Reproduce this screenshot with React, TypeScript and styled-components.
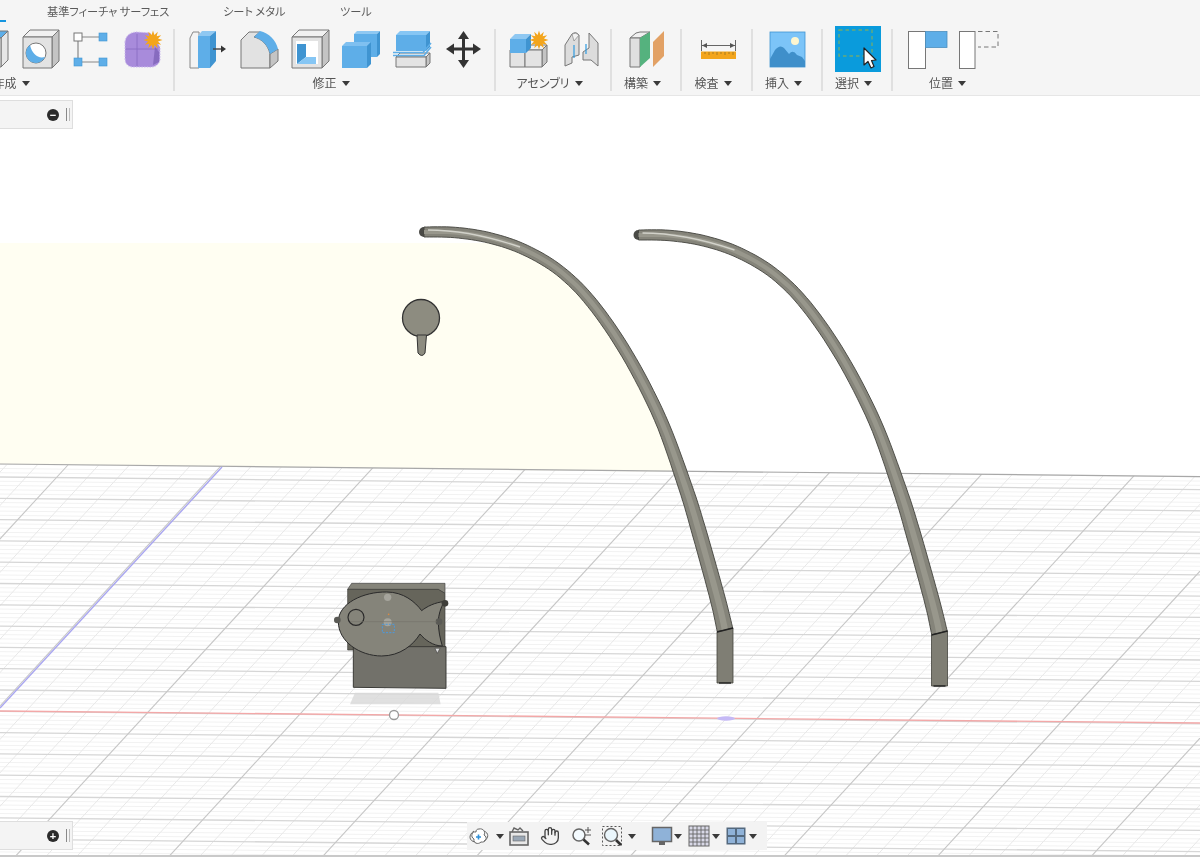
import React from "react";
import styled, { createGlobalStyle } from "styled-components";
import { Hand } from "lucide-react";

const Global = createGlobalStyle`
  html, body { margin: 0; padding: 0; background: #fff; overflow: hidden; }
  #root { width: 1200px; height: 857px; }
`;

const Page = styled.div`
  width: 1200px;
  height: 857px;
  display: flex;
  flex-direction: column;
  overflow: hidden;
  filter: blur(0.5px);
  font-family: "Noto Sans CJK JP", "Noto Sans", sans-serif;
  font-feature-settings: "palt";
  color: #555;
`;

const Toolbar = styled.header`
  flex: none;
  height: 96px;
  box-sizing: border-box;
  background: #f5f5f5;
  border-bottom: 1px solid #e6e6e6;
  display: flex;
  flex-direction: column;
  overflow: hidden;
`;

const Tabs = styled.nav`
  height: 22px;
  flex: none;
  display: flex;
  align-items: center;
  font-size: 11.2px;
  color: #5a5a5a;
`;

const ActiveTabMark = styled.span`
  width: 6px;
  height: 2px;
  align-self: flex-end;
  background: #1696e0;
  margin-right: 41px;
`;

const Tab = styled.span<{ $w: number }>`
  width: ${(p) => p.$w}px;
  white-space: nowrap;
  line-height: 22px;
`;

const Ribbon = styled.div`
  display: flex;
  margin-left: -144px;
  padding-top: 7px;
`;

const Group = styled.section<{ $w: number; $end?: boolean }>`
  flex: none;
  width: ${(p) => p.$w}px;
  height: 62px;
  box-sizing: border-box;
  padding: 1px 0 0 2px;
  border-right: ${(p) => (p.$end ? "none" : "2px solid #e0e0e0")};
  display: flex;
  flex-direction: column;
  align-items: center;
`;

const GroupIcons = styled.div`
  height: 38px;
  display: flex;
  align-items: center;
  gap: 13px;
`;

const GroupLabel = styled.div`
  margin-top: 8px;
  height: 14px;
  padding-right: 9px;
  display: flex;
  align-items: center;
  gap: 5px;
  font-size: 12px;
  line-height: 14px;
  color: #555;
  white-space: nowrap;
`;

const Caret = styled.i<{ $ml?: number }>`
  flex: none;
  display: block;
  width: 0;
  height: 0;
  margin-left: ${(p) => p.$ml ?? 0}px;
  border-left: 4px solid transparent;
  border-right: 4px solid transparent;
  border-top: 5px solid #3a3a3a;
`;

const Ico = styled.svg.attrs({ viewBox: "0 0 38 38" })`
  flex: none;
  width: 38px;
  height: 38px;
  overflow: visible;
`;

const SelectIco = styled.svg.attrs({ viewBox: "0 0 46 46" })`
  flex: none;
  width: 46px;
  height: 46px;
  margin: -4px 0;
  overflow: visible;
`;

const Viewport = styled.main`
  position: relative;
  flex: 1;
  min-height: 0;
  background: #fff;
`;

const Scene = styled.svg`
  position: absolute;
  inset: 0;
  width: 100%;
  height: 100%;
  display: block;
`;

const StatusEdge = styled.div`
  flex: none;
  height: 2px;
  background: #c9c9c9;
`;

const SidePanel = styled.aside<{ $top: number }>`
  position: absolute;
  left: 0;
  top: ${(p) => p.$top}px;
  width: 73px;
  height: 29px;
  box-sizing: border-box;
  background: #f4f4f4;
  border: 1px solid #dedede;
  border-left: none;
  display: flex;
  align-items: center;
  justify-content: flex-end;
  padding-right: 0;
  gap: 7px;
`;

const RoundButton = styled.span`
  width: 12px;
  height: 12px;
  border-radius: 50%;
  background: #2b2b2b;
  display: flex;
  align-items: center;
  justify-content: center;
  color: #fff;
  font: 700 11px/12px "Liberation Sans", sans-serif;
`;

const Grip = styled.span`
  width: 2px;
  height: 13px;
  margin-right: 2px;
  border-left: 1px solid #888;
  border-right: 1px solid #bbb;
`;

const NavBar = styled.div`
  position: absolute;
  left: 467px;
  top: 726px;
  width: 300px;
  height: 28px;
  box-sizing: border-box;
  padding-left: 2px;
  background: #f3f3f3;
  display: flex;
  align-items: center;
`;

const NavSlot = styled.span<{ $ml?: number }>`
  flex: none;
  display: flex;
  margin-left: ${(p) => p.$ml ?? 0}px;
  color: #444;
`;

const NavIco = styled.svg.attrs({ viewBox: "0 0 20 20" })`
  width: 20px;
  height: 20px;
  display: block;
  overflow: visible;
`;

const BLUE = "#5eaee8";
const DARK = "#3f94d1";
const EDGE = "#777";

type CubeProps = {
  x: number; y: number; w: number; h: number; d: number;
  front?: string; top?: string; side?: string; stroke?: string;
};

const Cube = ({ x, y, w, h, d, front = "#e3e3e3", top = "#f1f1f1", side = "#c4c4c4", stroke = EDGE }: CubeProps) => (
  <g stroke={stroke} strokeWidth={1} strokeLinejoin="round">
    <polygon points={`${x},${y} ${x + d},${y - d} ${x + w + d},${y - d} ${x + w},${y}`} fill={top} />
    <polygon points={`${x + w},${y} ${x + w + d},${y - d} ${x + w + d},${y + h - d} ${x + w},${y + h}`} fill={side} />
    <rect x={x} y={y} width={w} height={h} fill={front} />
  </g>
);

const Star = ({ cx, cy, r }: { cx: number; cy: number; r: number }) => {
  const pts: string[] = [];
  for (let i = 0; i < 24; i++) {
    const a = (i * Math.PI) / 12;
    const rr = i % 2 ? r * 0.55 : r;
    pts.push(`${(cx + rr * Math.cos(a)).toFixed(1)},${(cy + rr * Math.sin(a)).toFixed(1)}`);
  }
  return <polygon points={pts.join(" ")} fill="#f3a51c" />;
};

const BoxIcon = () => (
  <Ico><Cube x={1} y={8} w={29} h={29} d={7} front="#f2f2f2" top={BLUE} side="#e6e6e6" /></Ico>
);
const RevolveIcon = () => (
  <Ico>
    <Cube x={1} y={7} w={29} h={31} d={7} />
    <circle cx={14} cy={23} r={10} fill="#fff" stroke={EDGE} />
    <path d="M8 15 A10 10 0 0 0 11 32.5 A10 10 0 0 0 23 27 C16 29 10 24 8 15Z" fill={BLUE} />
  </Ico>
);
const SketchIcon = () => (
  <Ico>
    <path d="M9 7H26M5 11V28M9 32H26" stroke="#888" strokeWidth={1.2} fill="none" />
    <rect x={1} y={3} width={8} height={8} fill="#fff" stroke="#777" />
    <rect x={26} y={3} width={8} height={8} fill={BLUE} stroke={DARK} strokeWidth={0.6} />
    <rect x={1} y={28} width={8} height={8} fill={BLUE} stroke={DARK} strokeWidth={0.6} />
    <rect x={26} y={28} width={8} height={8} fill={BLUE} stroke={DARK} strokeWidth={0.6} />
  </Ico>
);
const FormIcon = () => (
  <Ico>
    <path d="M1 12 Q2 3 12 2 L26 3 L36 17 V30 Q34 38 24 37 H8 Q1 36 1 28Z" fill="#a88bdb" stroke="#c9b8ec" strokeDasharray="1.5 1.2" />
    <path d="M2 19 H34 M13 4 V36" stroke="#8a6ec4" strokeWidth={0.9} fill="none" />
    <path d="M31 17 L35 22 V32 L29 35Z" fill="#7c60b6" opacity={0.75} />
    <Star cx={29} cy={10} r={9.5} />
  </Ico>
);
const PressPullIcon = () => (
  <Ico>
    <path d="M1 38 V8 L4 2 H10 V38Z" fill="#f3f3f3" stroke="#888" />
    <polygon points="9,6 13,1 27,1 21,6" fill="#8fc8f2" />
    <rect x={9} y={6} width={12} height={32} fill={BLUE} />
    <polygon points="21,6 27,1 27,31 21,38" fill={DARK} />
    <path d="M24 19 H33" stroke="#444" strokeWidth={1.4} />
    <polygon points="32,15.5 37,19 32,22.5" fill="#333" />
  </Ico>
);
const FilletIcon = () => (
  <Ico>
    <path d="M1 38 V10 L9 2 H20 L14 7 C22 9 28 15 30 24 V38Z" fill="#e2e2e2" stroke={EDGE} />
    <path d="M30 24 L38 19 V31 L30 38Z" fill="#c4c4c4" stroke={EDGE} />
    <path d="M14 7 L20 1 C29 3 36 10 38 19 L30 24 C28 15 22 9 14 7Z" fill={BLUE} />
  </Ico>
);
const ShellIcon = () => (
  <Ico>
    <Cube x={1} y={7} w={30} h={31} d={7} />
    <rect x={5} y={11} width={22} height={23} fill="#fff" />
    <path d="M6 14 H15 V27 L6 34Z" fill={DARK} />
    <path d="M15 27 H25 V34 H6Z" fill="#86c6f4" />
  </Ico>
);
const CombineIcon = () => (
  <Ico>
    <Cube x={12} y={4} w={23} h={23} d={3} front={BLUE} top="#8fc8f2" side={DARK} stroke="none" />
    <Cube x={0} y={16} w={25} h={22} d={4} front={BLUE} top="#7fc0f0" side={DARK} stroke="none" />
  </Ico>
);
const SplitIcon = () => (
  <Ico>
    <Cube x={3} y={5} w={30} h={16} d={4} front={BLUE} top="#86c6f4" side={DARK} stroke="none" />
    <Cube x={3} y={27} w={30} h={10} d={4} />
    <path d="M0 22.5 H30 L38 13" stroke={BLUE} strokeWidth={1.6} fill="none" />
    <path d="M0 25.5 H31 L38 17" stroke={BLUE} strokeWidth={1.6} fill="none" />
  </Ico>
);
const MoveIcon = () => (
  <Ico>
    <path d="M8 19 H31 M19.5 8 V30" stroke="#333" strokeWidth={3} />
    <polygon points="19.5,1 25,9 14,9" fill="#333" />
    <polygon points="19.5,38 25,30 14,30" fill="#333" />
    <polygon points="2,19 10,13.5 10,24.5" fill="#333" />
    <polygon points="37,19 29,13.5 29,24.5" fill="#333" />
  </Ico>
);
const AssembleIcon = () => (
  <Ico>
    <Cube x={0} y={20} w={15} h={17} d={0} />
    <Cube x={15} y={20} w={17} h={17} d={5} />
    <Cube x={0} y={9} w={16} h={14} d={5} front={BLUE} top="#8fc8f2" side={DARK} stroke="none" />
    <Star cx={29} cy={10} r={9.5} />
  </Ico>
);
const JointIcon = () => (
  <Ico>
    <path d="M4 36 V15 L11 4 Q15 1 18 5 V25 L11 27 V33Z" fill="#dcdcdc" stroke={EDGE} />
    <path d="M11 4 Q15 2 18 5 L13 11Z" fill="#f2f2f2" stroke={EDGE} strokeWidth={0.6} />
    <path d="M22 22 L28 18 V3 L37 13 V36 L30 30 L22 30Z" fill="#dcdcdc" stroke={EDGE} />
    <path d="M13 15 V28 M25 14 V24" stroke="#2f9be0" strokeWidth={1.2} />
  </Ico>
);
const ConstructIcon = () => (
  <Ico>
    <polygon points="2,8 12,8 22,2 12,2 8,3" fill="#f0f0f0" stroke={EDGE} />
    <polygon points="2,8 12,8 12,37 2,37" fill="#e0e0e0" stroke={EDGE} />
    <polygon points="12,8 22,2 22,28 12,37" fill="#55b27e" />
    <polygon points="25,12 36,1 36,26 25,37" fill="#e2a165" />
  </Ico>
);
const InspectIcon = () => (
  <Ico>
    <path d="M2.5 10 V21 M36.5 10 V21 M3 15.5 H36" stroke="#666" strokeWidth={1} />
    <polygon points="3,15.5 8,13 8,18" fill="#555" />
    <polygon points="36,15.5 31,13 31,18" fill="#555" />
    <rect x={2} y={21.5} width={35} height={7.5} fill="#f3a51c" />
    <path d="M6 22 v2 M10 22 v3 M14 22 v2 M18 22 v3 M22 22 v2 M26 22 v3 M30 22 v2 M34 22 v3" stroke="#8a6a20" strokeWidth={0.7} />
  </Ico>
);
const InsertIcon = () => (
  <Ico>
    <rect x={1} y={2} width={35} height={35} fill="#7cc4f8" stroke={DARK} strokeWidth={0.8} />
    <circle cx={26} cy={11} r={4} fill="#fdf6d0" />
    <path d="M1 29 L6 20 Q11 14 15 18 L20 24 Q24 19 28 25 L33 27 L36 31 V37 H1Z" fill="#3f8fca" />
  </Ico>
);
const SelectIcon = () => (
  <SelectIco>
    <rect x={0} y={0} width={46} height={46} fill="#0a9bdc" />
    <rect x={4} y={4} width={33} height={26} fill="none" stroke="#6aab78" strokeWidth={1.4} strokeDasharray="3.5 3" />
    <path d="M29 22 V39 L33 35.5 L36 42 L39 40.5 L36.5 34.5 L41 34Z" fill="#fff" stroke="#222" strokeWidth={1.2} strokeLinejoin="round" />
  </SelectIco>
);
const PositionAIcon = () => (
  <Ico>
    <rect x={0.5} y={1.5} width={17} height={37} fill="#fff" stroke={EDGE} />
    <rect x={17.5} y={1.5} width={21.5} height={16} fill={BLUE} stroke="#4d8fbf" strokeWidth={0.8} />
  </Ico>
);
const PositionBIcon = () => (
  <Ico>
    <rect x={0.5} y={1.5} width={15.5} height={37} fill="#fff" stroke={EDGE} />
    <path d="M19 1.5 H39 V17 H19" fill="none" stroke="#777" strokeDasharray="4.5 3" />
  </Ico>
);

/* ---------- scene geometry ---------- */

type P3 = [number, number, number];
const tubeSpine: P3[] = [
  [424, 232, 10], [455, 232.5, 10.5], [490, 238, 10.5], [525, 250, 10.5], [560, 271, 10.5],
  [592, 303, 11], [627, 354, 11.5], [660, 418, 12], [685, 486, 13.5], [700, 535, 14.5],
  [718, 600, 15], [725, 630, 16],
];

const smooth = (p: P3[]): P3[] => {
  const out: P3[] = [];
  for (let i = 0; i < p.length - 1; i++) {
    const a = p[Math.max(i - 1, 0)], b = p[i], c = p[i + 1], d = p[Math.min(i + 2, p.length - 1)];
    for (let k = 0; k < 8; k++) {
      const t = k / 8, t2 = t * t, t3 = t2 * t;
      const f = (n: 0 | 1 | 2) =>
        0.5 * (2 * b[n] + (c[n] - a[n]) * t + (2 * a[n] - 5 * b[n] + 4 * c[n] - d[n]) * t2 + (3 * b[n] - a[n] - 3 * c[n] + d[n]) * t3);
      out.push([f(0), f(1), f(2)]);
    }
  }
  out.push(p[p.length - 1]);
  return out;
};

const spine = smooth(tubeSpine);

const offsetBand = (scale: number) => {
  const left: string[] = [];
  const right: string[] = [];
  spine.forEach((pt, i) => {
    const a = spine[Math.max(i - 1, 0)], b = spine[Math.min(i + 1, spine.length - 1)];
    const dx = b[0] - a[0], dy = b[1] - a[1], len = Math.hypot(dx, dy) || 1;
    const nx = -dy / len, ny = dx / len, w = (pt[2] * scale) / 2;
    left.push(`${(pt[0] + nx * w).toFixed(1)},${(pt[1] + ny * w).toFixed(1)}`);
    right.unshift(`${(pt[0] - nx * w).toFixed(1)},${(pt[1] - ny * w).toFixed(1)}`);
  });
  return [...left, ...right].join(" ");
};

const tubeOuter = offsetBand(1);
const tubeInner = offsetBand(0.4);

const Tube = ({ dx, dy }: { dx: number; dy: number }) => (
  <g transform={`translate(${dx} ${dy})`}>
    <circle cx={424} cy={232} r={5} fill="#4a4a46" />
    <polygon points={tubeOuter} fill="#85847a" stroke="#44443e" strokeWidth={0.9} />
    <polygon points={tubeInner} fill="#98978c" />
    <path d="M428 230 Q470 230 520 247" stroke="#d2d2ca" strokeWidth={1.4} fill="none" />
    <polygon points="717,632 733,628 733,683 717,683" fill="#7f7e74" stroke="#44443e" strokeWidth={0.8} />
    <path d="M717 632 L733 628" stroke="#222" strokeWidth={1.4} />
    <path d="M719 683 H731" stroke="#222" strokeWidth={1.4} />
  </g>
);

const lines = (() => {
  const minorH: number[] = [];
  const majorH: number[] = [];
  for (let i = -5; i < 95; i++) {
    const y = 477 + i * 4.26;
    if (i % 5 === 0) majorH.push(y);
    else minorH.push(y);
  }
  const minorD: number[] = [];
  const majorD: number[] = [];
  for (let i = -5; i < 60; i++) {
    const x = 68 + (i * 153.7) / 5;
    if (i % 5 === 0) majorD.push(x);
    else minorD.push(x);
  }
  return { minorH, majorH, minorD, majorD };
})();

const tilt = 0.0105;

const Floor = () => (
  <>
    <defs>
      <clipPath id="floor-clip">
        <polygon points="0,464 1200,476.6 1200,857 0,857" />
      </clipPath>
    </defs>
    <g clipPath="url(#floor-clip)" fill="none">
      {lines.minorH.map((y) => (
        <line key={y} x1={0} y1={y} x2={1200} y2={y + 1200 * tilt} stroke="#f2f2f2" strokeWidth={1} />
      ))}
      {lines.minorD.map((x) => (
        <line key={x} x1={x} y1={465} x2={x - 0.92 * 400} y2={865} stroke="#e8e8e8" strokeWidth={1} />
      ))}
      {lines.majorH.map((y) => (
        <line key={y} x1={0} y1={y} x2={1200} y2={y + 1200 * tilt} stroke="#d6d6d6" strokeWidth={1.3} />
      ))}
      {lines.majorD.map((x) => (
        <line key={x} x1={x} y1={465} x2={x - 0.92 * 400} y2={865} stroke="#c6c6c6" strokeWidth={1.1} />
      ))}
    </g>
    <line x1={0} y1={464} x2={1200} y2={476.6} stroke="#a8a8a8" strokeWidth={1.2} />
    <line x1={222} y1={467} x2={0} y2={708} stroke="#a9a6f0" strokeWidth={1.4} />
    <line x1={0} y1={711} x2={1200} y2={723} stroke="#f3a8a8" strokeWidth={1.4} />
  </>
);

const FishObject = () => (
  <g transform="translate(310 570) scale(0.3333)">
    <polygon points="135,368 385,368 392,403 120,403" fill="#d8d8d8" opacity={0.8} />
    <polygon points="113,58 125,40 405,40 405,70 385,60" fill="#85847a" stroke="#444" strokeWidth={2} />
    <polygon points="113,58 385,58 405,70 405,240 113,240" fill="#66655b" stroke="#3a3a36" strokeWidth={2} />
    <polygon points="130,230 408,230 408,355 130,352" fill="#72716a" stroke="#3a3a36" strokeWidth={3} />
    <path
      d="M85 155 C85 100 160 65 230 66 C280 66 315 95 335 122 C350 110 375 97 402 95 C392 115 385 135 385 155 C385 180 390 205 397 228 C370 228 345 210 330 192 C310 225 270 258 215 258 C150 258 85 215 85 155Z"
      fill="#85847a"
      stroke="#2a2a2a"
      strokeWidth={3}
    />
    <circle cx={138} cy={142} r={24} fill="none" stroke="#2a2a2a" strokeWidth={3.5} />
    <circle cx={233} cy={82} r={11} fill="#a5a49c" />
    <circle cx={82} cy={150} r={10} fill="#5a5a55" />
    <circle cx={405} cy={100} r={10} fill="#3f3f3a" />
    <circle cx={387} cy={155} r={10} fill="#5a5a55" />
    <circle cx={233} cy={157} r={12} fill="#a5a49c" />
    <path d="M120 155 H380" stroke="#75746a" strokeWidth={2} />
    <circle cx={236} cy={133} r={2.5} fill="#e08a3c" />
    <rect x={217} y={163} width={36} height={25} fill="none" stroke="#4a9be0" strokeWidth={3} strokeDasharray="6 4" />
    <polygon points="375,235 390,235 382,250" fill="#ddd" stroke="#333" strokeWidth={1.5} />
  </g>
);

const OrbitIcon = () => (
  <NavIco>
    <path d="M10 3 C14 2 17 6 15 9 C19 11 17 17 12 16 C9 19 4 17 5 13 C1 11 3 5 7 6 C7 4 8 3 10 3Z" fill="#fff" stroke="#666" />
    <path d="M5 5 C-1 9 0 15 6 16 M15 15 C20 12 20 7 15 5" fill="none" stroke="#666" strokeWidth={1} />
    <path d="M7 11 H12 M9.5 8.5 V13.5" stroke="#2f8fd8" strokeWidth={1.6} />
  </NavIco>
);
const CameraIcon = () => (
  <NavIco>
    <rect x={1} y={6} width={18} height={13} fill="#e8e8e8" stroke="#666" strokeWidth={1.6} />
    <rect x={4} y={10} width={12} height={5} fill="#9aa7b5" stroke="#666" strokeWidth={0.6} />
    <path d="M3 6 L5 2 L9 4 L11 2 L14 5" fill="none" stroke="#666" strokeWidth={1.4} />
  </NavIco>
);
const ZoomIcon = () => (
  <NavIco>
    <circle cx={8} cy={9} r={6} fill="#f4fbff" stroke="#666" strokeWidth={1.5} />
    <path d="M12.5 13.5 L18 18.5" stroke="#333" strokeWidth={2.6} />
    <path d="M14 4 H20 M17 1 V7 M14 9 H20" stroke="#555" strokeWidth={1} />
  </NavIco>
);
const FitIcon = () => (
  <NavIco>
    <rect x={0.5} y={0.5} width={19} height={19} fill="none" stroke="#555" strokeDasharray="2 2" />
    <circle cx={9} cy={9} r={6.5} fill="#eaf6fc" stroke="#666" strokeWidth={1.4} />
    <path d="M14 14 L19 19" stroke="#333" strokeWidth={2.6} />
  </NavIco>
);
const DisplayIcon = () => (
  <NavIco>
    <rect x={0.5} y={1.5} width={19} height={14} fill="#8fb2d8" stroke="#666" strokeWidth={1.5} />
    <path d="M7 16 H13 V19 H7Z" fill="#666" />
  </NavIco>
);
const GridIcon = () => (
  <NavIco>
    <rect x={0} y={0} width={20} height={20} fill="#d8d8e6" stroke="#666" strokeWidth={1} />
    <path d="M4 0V20M8 0V20M12 0V20M16 0V20M0 4H20M0 8H20M0 12H20M0 16H20" stroke="#666" strokeWidth={0.9} />
  </NavIco>
);
const ViewsIcon = () => (
  <NavIco>
    <rect x={0.5} y={1.5} width={19} height={17} fill="#54697e" />
    <rect x={2} y={3} width={7} height={6} fill="#8fb2d8" />
    <rect x={11} y={3} width={7} height={6} fill="#8fb2d8" />
    <rect x={2} y={11} width={7} height={6} fill="#8fb2d8" />
    <rect x={11} y={11} width={7} height={6} fill="#8fb2d8" />
  </NavIco>
);

const yellowEdge = spine
  .filter((s) => s[1] >= 243 && s[1] <= 472)
  .map((s) => `${s[0].toFixed(1)},${s[1].toFixed(1)}`)
  .join(" ");

export default function App() {
  return (
    <>
      <Global />
      <Page>
        <Toolbar>
          <Tabs>
            <ActiveTabMark />
            <Tab $w={176}>基準フィーチャ サーフェス</Tab>
            <Tab $w={117}>シート メタル</Tab>
            <Tab $w={40}>ツール</Tab>
          </Tabs>
          <Ribbon>
            <Group $w={319}>
              <GroupIcons>
                <BoxIcon /><BoxIcon /><BoxIcon /><RevolveIcon /><SketchIcon /><FormIcon />
              </GroupIcons>
              <GroupLabel>作成<Caret /></GroupLabel>
            </Group>
            <Group $w={321}>
              <GroupIcons>
                <PressPullIcon /><FilletIcon /><ShellIcon /><CombineIcon /><SplitIcon /><MoveIcon />
              </GroupIcons>
              <GroupLabel>修正<Caret /></GroupLabel>
            </Group>
            <Group $w={116}>
              <GroupIcons><AssembleIcon /><JointIcon /></GroupIcons>
              <GroupLabel>アセンブリ<Caret /></GroupLabel>
            </Group>
            <Group $w={70}>
              <GroupIcons><ConstructIcon /></GroupIcons>
              <GroupLabel>構築<Caret /></GroupLabel>
            </Group>
            <Group $w={71}>
              <GroupIcons><InspectIcon /></GroupIcons>
              <GroupLabel>検査<Caret /></GroupLabel>
            </Group>
            <Group $w={70}>
              <GroupIcons><InsertIcon /></GroupIcons>
              <GroupLabel>挿入<Caret /></GroupLabel>
            </Group>
            <Group $w={70}>
              <GroupIcons><SelectIcon /></GroupIcons>
              <GroupLabel>選択<Caret /></GroupLabel>
            </Group>
            <Group $w={116} $end>
              <GroupIcons><PositionAIcon /><PositionBIcon /></GroupIcons>
              <GroupLabel>位置<Caret /></GroupLabel>
            </Group>
          </Ribbon>
        </Toolbar>
        <Viewport>
          <Scene viewBox="0 96 1200 759" preserveAspectRatio="none">
            <polygon points={`0,243 ${yellowEdge} 668,472 0,464`} fill="#fffef2" />
            <Floor />
            <Tube dx={0} dy={0} />
            <Tube dx={214.5} dy={3} />
            <circle cx={421} cy={318} r={18.5} fill="#8d8c80" stroke="#333" strokeWidth={1.3} />
            <path d="M417 335 L418 353 Q422 358 425 353 L426.5 335Z" fill="#8d8c80" stroke="#333" strokeWidth={1} />
            <FishObject />
            <circle cx={394} cy={715} r={4.5} fill="#fff" stroke="#999" strokeWidth={1.3} />
            <ellipse cx={726} cy={718.5} rx={9} ry={2.2} fill="#c5b9f5" />
          </Scene>
          <SidePanel $top={4}>
            <RoundButton>−</RoundButton>
            <Grip />
          </SidePanel>
          <SidePanel $top={725}>
            <RoundButton>+</RoundButton>
            <Grip />
          </SidePanel>
          <NavBar>
            <NavSlot><OrbitIcon /></NavSlot>
            <Caret $ml={7} />
            <NavSlot $ml={5}><CameraIcon /></NavSlot>
            <NavSlot $ml={11}><Hand size={20} strokeWidth={1.6} /></NavSlot>
            <NavSlot $ml={11}><ZoomIcon /></NavSlot>
            <NavSlot $ml={11}><FitIcon /></NavSlot>
            <Caret $ml={6} />
            <NavSlot $ml={16}><DisplayIcon /></NavSlot>
            <Caret $ml={2} />
            <NavSlot $ml={7}><GridIcon /></NavSlot>
            <Caret $ml={3} />
            <NavSlot $ml={6}><ViewsIcon /></NavSlot>
            <Caret $ml={3} />
          </NavBar>
        </Viewport>
        <StatusEdge />
      </Page>
    </>
  );
}
